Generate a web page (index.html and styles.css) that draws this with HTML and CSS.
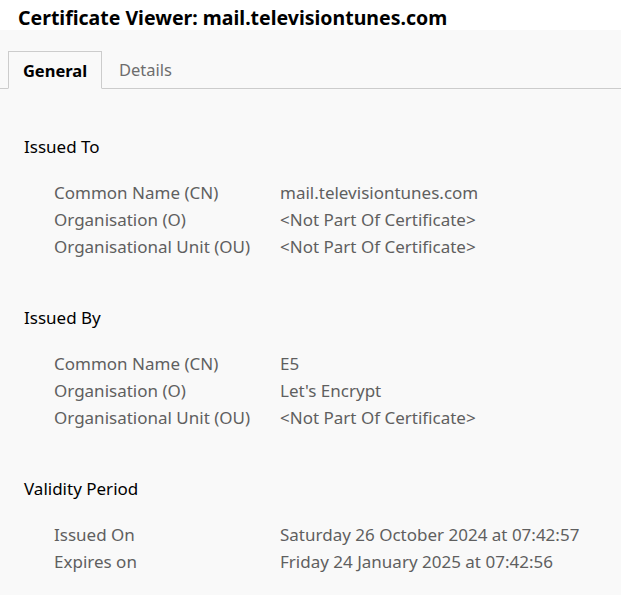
FILE: index.html
```html
<!DOCTYPE html>
<html lang="en">
<head>
  <meta charset="UTF-8">
  <title>Certificate Viewer: mail.televisiontunes.com</title>
  <link rel="stylesheet" href="styles.css">
</head>
<body>
  <header class="titlebar">
    <h1>Certificate Viewer: mail.televisiontunes.com</h1>
  </header>
  <nav class="tabs">
    <span class="tab active">General</span>
    <span class="tab">Details</span>
  </nav>
  <main class="content">
    <section class="group">
      <h2>Issued To</h2>
      <div class="fields">
        <span class="label">Common Name (CN)</span><span class="value">mail.televisiontunes.com</span>
        <span class="label">Organisation (O)</span><span class="value">&lt;Not Part Of Certificate&gt;</span>
        <span class="label">Organisational Unit (OU)</span><span class="value">&lt;Not Part Of Certificate&gt;</span>
      </div>
    </section>
    <section class="group">
      <h2>Issued By</h2>
      <div class="fields">
        <span class="label">Common Name (CN)</span><span class="value">E5</span>
        <span class="label">Organisation (O)</span><span class="value">Let's Encrypt</span>
        <span class="label">Organisational Unit (OU)</span><span class="value">&lt;Not Part Of Certificate&gt;</span>
      </div>
    </section>
    <section class="group">
      <h2>Validity Period</h2>
      <div class="fields">
        <span class="label">Issued On</span><span class="value">Saturday 26 October 2024 at 07:42:57</span>
        <span class="label">Expires on</span><span class="value">Friday 24 January 2025 at 07:42:56</span>
      </div>
    </section>
  </main>
</body>
</html>
```

FILE: styles.css
```css
* {
  margin: 0;
  padding: 0;
  box-sizing: border-box;
}
body {
  font-family: 'Noto Sans', sans-serif;
  background: #f9f9f9;
  color: #5f5f5f;
  font-size: 17px;
  overflow: hidden;
}
.titlebar {
  background: #fff;
  height: 30px;
  padding-left: 18px;
}
.titlebar h1 {
  font-size: 19.5px;
  font-weight: 700;
  color: #000;
  line-height: 36px;
  white-space: nowrap;
}
.tabs {
  display: flex;
  margin-top: 21px;
  padding-left: 8px;
  border-bottom: 1px solid #cccccc;
  height: 38px;
}
.tab {
  width: 94px;
  height: 38px;
  line-height: 38px;
  text-align: center;
  font-size: 16.5px;
  color: #6d6d6d;
}
.tab.active {
  border: 1px solid #cccccc;
  border-bottom: 1px solid #f9f9f9;
  line-height: 37px;
  color: #000;
  font-weight: 700;
}
.tab + .tab {
  width: auto;
  padding-left: 17px;
}
.content {
  padding: 46px 0 0 24px;
}
.group {
  margin-bottom: 46.5px;
}
.group h2 {
  font-size: 17px;
  font-weight: 400;
  color: #000;
  line-height: 24px;
}
.fields {
  display: grid;
  grid-template-columns: 226px auto;
  padding: 19.5px 0 0 30px;
  line-height: 27px;
}
```
